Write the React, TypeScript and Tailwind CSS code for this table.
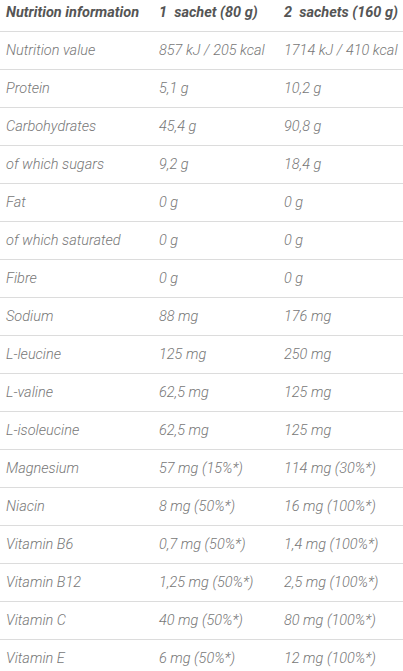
const rows: [string, string, string][] = [
  ["Nutrition value", "857 kJ / 205 kcal", "1714 kJ / 410 kcal"],
  ["Protein", "5,1 g", "10,2 g"],
  ["Carbohydrates", "45,4 g", "90,8 g"],
  ["of which sugars", "9,2 g", "18,4 g"],
  ["Fat", "0 g", "0 g"],
  ["of which saturated", "0 g", "0 g"],
  ["Fibre", "0 g", "0 g"],
  ["Sodium", "88 mg", "176 mg"],
  ["L-leucine", "125 mg", "250 mg"],
  ["L-valine", "62,5 mg", "125 mg"],
  ["L-isoleucine", "62,5 mg", "125 mg"],
  ["Magnesium", "57 mg (15%*)", "114 mg (30%*)"],
  ["Niacin", "8 mg (50%*)", "16 mg (100%*)"],
  ["Vitamin B6", "0,7 mg (50%*)", "1,4 mg (100%*)"],
  ["Vitamin B12", "1,25 mg (50%*)", "2,5 mg (100%*)"],
  ["Vitamin C", "40 mg (50%*)", "80 mg (100%*)"],
  ["Vitamin E", "6 mg (50%*)", "12 mg (100%*)"],
];

export default function App() {
  return (
    <div className="w-[403px] bg-white font-['Roboto',sans-serif] italic text-[14.5px]">
      <div className="grid grid-cols-[153px_125px_1fr] h-[32px] items-start pt-[2px] border-b border-[#dcdcdc] font-bold text-[#555] whitespace-pre">
        <div className="pl-[6px]">Nutrition information</div>
        <div className="pl-[6px]">1  sachet (80 g)</div>
        <div className="pl-[6px]">2  sachets (160 g)</div>
      </div>
      {rows.map((r) => (
        <div
          key={r[0]}
          className="grid grid-cols-[153px_125px_1fr] h-[38px] items-center border-b border-[#dcdcdc] font-light text-[#777] whitespace-nowrap"
        >
          <div className="pl-[6px]">{r[0]}</div>
          <div className="pl-[6px]">{r[1]}</div>
          <div className="pl-[6px]">{r[2]}</div>
        </div>
      ))}
    </div>
  );
}
